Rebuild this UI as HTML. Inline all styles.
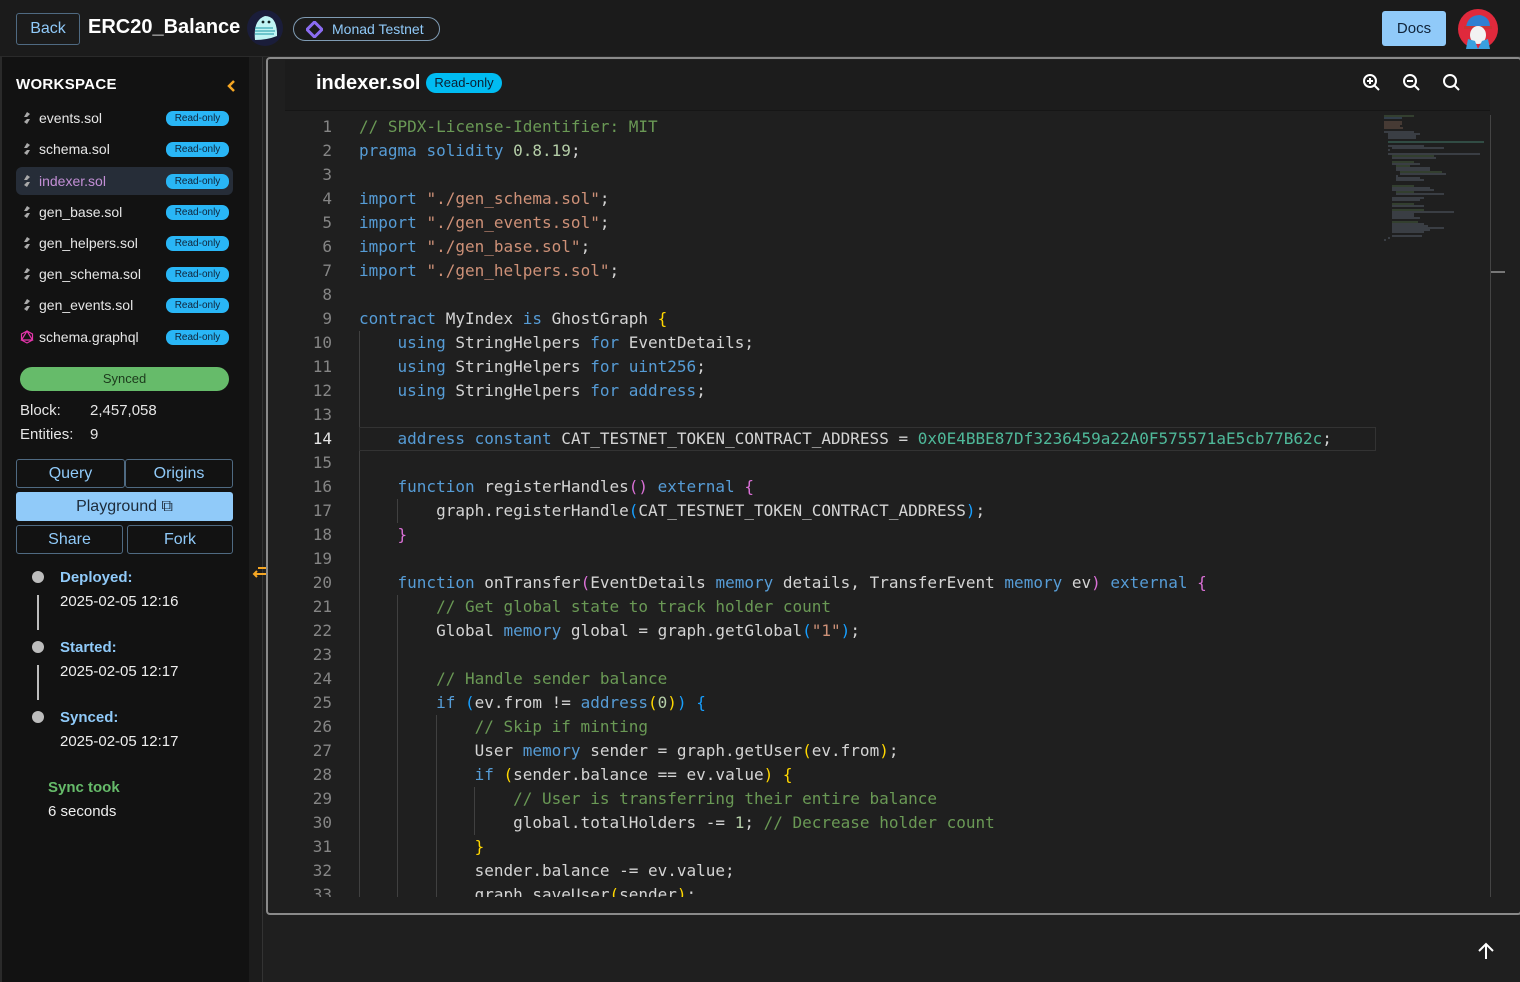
<!DOCTYPE html>
<html><head><meta charset="utf-8">
<style>
*{margin:0;padding:0;box-sizing:border-box}
body{width:1520px;height:982px;background:#1f1f1f;font-family:"Liberation Sans",sans-serif;color:#e0e0e0;position:relative;overflow:hidden}
.abs{position:absolute}
.top{left:0;top:0;width:1520px;height:57px;background:#1b1b1b;border-bottom:1px solid #2a2a2a}
.side{left:0;top:57px;width:249px;height:925px;background:#121212;border-left:2px solid #2a2a2a}
.strip{left:249px;top:57px;width:14px;height:925px;background:#1c1c1c;border-right:1px solid #333}
.btn{position:absolute;border:1px solid #4f6a82;border-radius:3px;color:#90caf9;font-size:16px;text-align:center}
.file{position:absolute;left:16px;width:217px;height:28px;font-size:14px;color:#e6e6e6;line-height:28px;padding-left:23px;border-radius:6px}
.file .ic{position:absolute;left:6px;top:7px;width:10px;height:14px}
.badge{position:absolute;right:4px;top:7px;width:63px;height:15px;border-radius:7px;background:#29b6f6;color:#10243a;font-size:10px;line-height:15px;text-align:center}
.code{position:absolute;left:285px;top:115px;width:1100px;height:782px;overflow:hidden;font-family:"DejaVu Sans Mono",monospace;font-size:16px;color:#d4d4d4}
.ln{position:absolute;left:0;width:47px;text-align:right;color:#858585}
.cl{position:absolute;left:74px;white-space:pre;height:24px;line-height:24px}
.k{color:#569cd6}.c{color:#6a9955}.s{color:#ce9178}.n{color:#b5cea8}.h{color:#4fb99a}
.y{color:#ffd700}.p{color:#da70d6}.b{color:#179fff}
.g{position:absolute;width:1px;background:#404040}
</style></head><body>
<div class="abs top"></div>
<div class="btn" style="left:16px;top:13px;width:64px;height:32px;line-height:30px;border-color:#4f6a82">Back</div>
<div class="abs" style="left:88px;top:16px;font-size:20px;font-weight:bold;color:#fff">ERC20_Balance</div>
<svg class="abs" style="left:247px;top:10px" width="36" height="36"><circle cx="18" cy="18" r="18" fill="#1a1d3a"/><path d="M8 30 Q6 10 18 6 Q29 6 30 22 L30 26 Q20 30 8 30Z" fill="#bff4f4"/><g stroke="#3aa9b5" stroke-width="1.2"><line x1="8" y1="18" x2="26" y2="18"/><line x1="8" y1="21" x2="28" y2="21"/><line x1="8" y1="24" x2="27" y2="24"/></g><circle cx="16" cy="12" r="1.4" fill="#122"/><circle cx="22" cy="12" r="1.4" fill="#122"/></svg>
<div class="abs" style="left:293px;top:17px;width:147px;height:24px;border:1px solid #7f9bb3;border-radius:12px;color:#90caf9;font-size:14px;line-height:22px;padding-left:38px">Monad Testnet</div>
<svg class="abs" style="left:306px;top:21px" width="17" height="17"><path d="M8.5 1 L16 8.5 L8.5 16 L1 8.5Z" fill="none" stroke="#8b6cf2" stroke-width="3" stroke-linejoin="round"/></svg>
<div class="abs" style="left:1382px;top:11px;width:64px;height:35px;background:#90caf9;border-radius:3px;color:#10243a;font-size:15px;text-align:center;line-height:35px">Docs</div>
<svg class="abs" style="left:1458px;top:9px" width="40" height="40"><circle cx="20" cy="20" r="20" fill="#e0293c"/><path d="M8 18 Q10 6 22 6 Q32 8 32 18Z" fill="#2f7fd1"/><rect x="6" y="17" width="28" height="3" fill="#c33"/><ellipse cx="20" cy="26" rx="8" ry="9" fill="#f2f2f2"/><path d="M8 40 L10 30 L17 32 L20 40Z M32 40 L30 30 L24 32 L20 40Z" fill="#3aa0e0"/></svg>

<div class="abs side"></div>
<div class="abs strip"></div>
<div class="abs" style="left:16px;top:76px;font-size:15px;font-weight:bold;color:#fff;letter-spacing:.3px">WORKSPACE</div>
<svg class="abs" style="left:226px;top:79px" width="10" height="14"><path d="M8 2 L3 7 L8 12" stroke="#f5a623" stroke-width="2.5" fill="none"/></svg>

<div class="file" style="top:104px">events.sol<svg class="ic" viewBox="0 0 10 14"><path d="M2 6 L5 1 L8 3 L5 6Z M8 8 L5 13 L2 11 L5 8Z" fill="#aaa"/></svg><div class="badge">Read-only</div></div>
<div class="file" style="top:135px">schema.sol<svg class="ic" viewBox="0 0 10 14"><path d="M2 6 L5 1 L8 3 L5 6Z M8 8 L5 13 L2 11 L5 8Z" fill="#aaa"/></svg><div class="badge">Read-only</div></div>
<div class="file" style="top:167px;background:#262d38;color:#c38fd6">indexer.sol<svg class="ic" viewBox="0 0 10 14"><path d="M2 6 L5 1 L8 3 L5 6Z M8 8 L5 13 L2 11 L5 8Z" fill="#aaa"/></svg><div class="badge">Read-only</div></div>
<div class="file" style="top:198px">gen_base.sol<svg class="ic" viewBox="0 0 10 14"><path d="M2 6 L5 1 L8 3 L5 6Z M8 8 L5 13 L2 11 L5 8Z" fill="#aaa"/></svg><div class="badge">Read-only</div></div>
<div class="file" style="top:229px">gen_helpers.sol<svg class="ic" viewBox="0 0 10 14"><path d="M2 6 L5 1 L8 3 L5 6Z M8 8 L5 13 L2 11 L5 8Z" fill="#aaa"/></svg><div class="badge">Read-only</div></div>
<div class="file" style="top:260px">gen_schema.sol<svg class="ic" viewBox="0 0 10 14"><path d="M2 6 L5 1 L8 3 L5 6Z M8 8 L5 13 L2 11 L5 8Z" fill="#aaa"/></svg><div class="badge">Read-only</div></div>
<div class="file" style="top:291px">gen_events.sol<svg class="ic" viewBox="0 0 10 14"><path d="M2 6 L5 1 L8 3 L5 6Z M8 8 L5 13 L2 11 L5 8Z" fill="#aaa"/></svg><div class="badge">Read-only</div></div>
<div class="file" style="top:323px">schema.graphql<svg class="ic" style="left:4px;width:14px" viewBox="0 0 14 14"><path d="M7 1 L12.5 4 L12.5 10 L7 13 L1.5 10 L1.5 4Z M7 1 L12.5 10 L1.5 10Z" fill="none" stroke="#e535ab" stroke-width="1.2"/></svg><div class="badge">Read-only</div></div>

<div class="abs" style="left:20px;top:367px;width:209px;height:24px;background:#66bb6a;border-radius:12px;color:#1c3a1c;font-size:13px;text-align:center;line-height:24px">Synced</div>
<div class="abs" style="left:20px;top:402px;font-size:15px;color:#e6e6e6">Block:</div>
<div class="abs" style="left:90px;top:402px;font-size:15px;color:#e6e6e6">2,457,058</div>
<div class="abs" style="left:20px;top:426px;font-size:15px;color:#e6e6e6">Entities:</div>
<div class="abs" style="left:90px;top:426px;font-size:15px;color:#e6e6e6">9</div>

<div class="btn" style="left:16px;top:459px;width:109px;height:29px;line-height:27px">Query</div>
<div class="btn" style="left:125px;top:459px;width:108px;height:29px;line-height:27px">Origins</div>
<div class="abs" style="left:16px;top:492px;width:217px;height:29px;background:#90caf9;border-radius:3px;color:#1d2b3a;font-size:16px;text-align:center;line-height:29px">Playground ⧉</div>
<div class="btn" style="left:16px;top:525px;width:107px;height:29px;line-height:27px">Share</div>
<div class="btn" style="left:127px;top:525px;width:106px;height:29px;line-height:27px">Fork</div>

<div class="abs" style="left:32px;top:571px;width:12px;height:12px;border-radius:6px;background:#bdbdbd"></div>
<div class="abs" style="left:37px;top:595px;width:2px;height:35px;background:#bdbdbd"></div>
<div class="abs" style="left:32px;top:641px;width:12px;height:12px;border-radius:6px;background:#bdbdbd"></div>
<div class="abs" style="left:37px;top:665px;width:2px;height:35px;background:#bdbdbd"></div>
<div class="abs" style="left:32px;top:711px;width:12px;height:12px;border-radius:6px;background:#bdbdbd"></div>
<div class="abs" style="left:60px;top:569px;font-size:15px;font-weight:bold;color:#90caf9">Deployed:</div>
<div class="abs" style="left:60px;top:593px;font-size:15px;color:#eee">2025-02-05 12:16</div>
<div class="abs" style="left:60px;top:639px;font-size:15px;font-weight:bold;color:#90caf9">Started:</div>
<div class="abs" style="left:60px;top:663px;font-size:15px;color:#eee">2025-02-05 12:17</div>
<div class="abs" style="left:60px;top:709px;font-size:15px;font-weight:bold;color:#90caf9">Synced:</div>
<div class="abs" style="left:60px;top:733px;font-size:15px;color:#eee">2025-02-05 12:17</div>
<div class="abs" style="left:48px;top:779px;font-size:15px;font-weight:bold;color:#66bb6a">Sync took</div>
<div class="abs" style="left:48px;top:803px;font-size:15px;color:#eee">6 seconds</div>

<svg class="abs" style="left:252px;top:563px" width="20" height="16"><path d="M6 5 H18 M15 2 L18 5 L15 8 M14 11 H2 M5 8 L2 11 L5 14" stroke="#f5a623" stroke-width="2" fill="none"/></svg>

<div class="abs" style="left:266px;top:57px;width:1256px;height:858px;border:2px solid #8a8a8a;border-radius:4px;background:#1f1f1f"></div>
<div class="abs" style="left:285px;top:60px;width:1205px;height:51px;background:#1c1c1c;border-bottom:1px solid #161616"></div>
<div class="abs" style="left:316px;top:72px;font-size:20px;font-weight:bold;color:#fff">indexer.sol</div>
<div class="abs" style="left:426px;top:73px;width:76px;height:20px;background:#00bcf2;border-radius:10px;color:#0a1f33;font-size:13px;text-align:center;line-height:20px">Read-only</div>
<svg class="abs" style="left:1361px;top:73px" width="100" height="22"><g stroke="#fff" stroke-width="2" fill="none"><circle cx="9" cy="8" r="6"/><line x1="13" y1="12" x2="18" y2="17"/><line x1="6" y1="8" x2="12" y2="8"/><line x1="9" y1="5" x2="9" y2="11"/><circle cx="49" cy="8" r="6"/><line x1="53" y1="12" x2="58" y2="17"/><line x1="46" y1="8" x2="52" y2="8"/><circle cx="89" cy="8" r="6"/><line x1="93" y1="12" x2="98" y2="17"/></g></svg>

<div class="abs" style="left:1490px;top:115px;width:1px;height:782px;background:#444"></div>
<div class="abs" style="left:1491px;top:271px;width:14px;height:2px;background:#777"></div>
<svg class="abs" style="left:1384px;top:115px" width="104" height="130"><g stroke-width="1" opacity=".85">
<line x1="0" y1="1" x2="30" y2="1" stroke="#4e6b45"/><line x1="0" y1="3" x2="18" y2="3" stroke="#4d6a85"/>
<line x1="0" y1="7" x2="18" y2="7" stroke="#7a5e50"/><line x1="0" y1="9" x2="18" y2="9" stroke="#7a5e50"/><line x1="0" y1="11" x2="16" y2="11" stroke="#7a5e50"/><line x1="0" y1="13" x2="19" y2="13" stroke="#7a5e50"/>
<line x1="0" y1="17" x2="30" y2="17" stroke="#5e6a77"/><line x1="4" y1="19" x2="36" y2="19" stroke="#5e6a77"/><line x1="4" y1="21" x2="32" y2="21" stroke="#5e6a77"/><line x1="4" y1="23" x2="32" y2="23" stroke="#5e6a77"/>
<line x1="4" y1="27" x2="100" y2="27" stroke="#4a8a78"/>
<line x1="4" y1="31" x2="40" y2="31" stroke="#5e6a77"/><line x1="8" y1="33" x2="60" y2="33" stroke="#5e6a77"/><line x1="4" y1="35" x2="6" y2="35" stroke="#5e6a77"/>
<line x1="4" y1="39" x2="96" y2="39" stroke="#5e6a77"/><line x1="8" y1="41" x2="50" y2="41" stroke="#4e6b45"/><line x1="8" y1="43" x2="52" y2="43" stroke="#5e6a77"/>
<line x1="8" y1="47" x2="30" y2="47" stroke="#4e6b45"/><line x1="8" y1="49" x2="36" y2="49" stroke="#5e6a77"/><line x1="12" y1="51" x2="26" y2="51" stroke="#4e6b45"/><line x1="12" y1="53" x2="46" y2="53" stroke="#5e6a77"/><line x1="12" y1="55" x2="46" y2="55" stroke="#5e6a77"/><line x1="16" y1="57" x2="58" y2="57" stroke="#4e6b45"/><line x1="16" y1="59" x2="62" y2="59" stroke="#5e6a77"/><line x1="12" y1="61" x2="14" y2="61" stroke="#5e6a77"/><line x1="12" y1="63" x2="36" y2="63" stroke="#5e6a77"/><line x1="12" y1="65" x2="40" y2="65" stroke="#5e6a77"/>
<line x1="8" y1="71" x2="30" y2="71" stroke="#4e6b45"/><line x1="8" y1="73" x2="46" y2="73" stroke="#5e6a77"/><line x1="8" y1="75" x2="50" y2="75" stroke="#5e6a77"/><line x1="12" y1="77" x2="30" y2="77" stroke="#4e6b45"/><line x1="12" y1="79" x2="60" y2="79" stroke="#5e6a77"/><line x1="8" y1="83" x2="40" y2="83" stroke="#5e6a77"/><line x1="8" y1="85" x2="36" y2="85" stroke="#5e6a77"/>
<line x1="8" y1="89" x2="30" y2="89" stroke="#4e6b45"/><line x1="8" y1="91" x2="40" y2="91" stroke="#5e6a77"/>
<line x1="8" y1="95" x2="40" y2="95" stroke="#4e6b45"/><line x1="8" y1="97" x2="70" y2="97" stroke="#5e6a77"/><line x1="8" y1="99" x2="30" y2="99" stroke="#5e6a77"/><line x1="8" y1="101" x2="30" y2="101" stroke="#5e6a77"/><line x1="8" y1="103" x2="36" y2="103" stroke="#5e6a77"/>
<line x1="8" y1="107" x2="34" y2="107" stroke="#4e6b45"/><line x1="8" y1="109" x2="40" y2="109" stroke="#5e6a77"/><line x1="8" y1="111" x2="44" y2="111" stroke="#5e6a77"/><line x1="8" y1="113" x2="60" y2="113" stroke="#5e6a77"/><line x1="8" y1="115" x2="46" y2="115" stroke="#5e6a77"/><line x1="8" y1="117" x2="40" y2="117" stroke="#5e6a77"/>
<line x1="8" y1="121" x2="38" y2="121" stroke="#5e6a77"/><line x1="4" y1="123" x2="6" y2="123" stroke="#5e6a77"/><line x1="0" y1="125" x2="2" y2="125" stroke="#5e6a77"/>
</g></svg>

<div class="code">
<div class="g" style="left:74px;top:216px;height:600px"></div>
<div class="g" style="left:112px;top:384px;height:24px"></div>
<div class="g" style="left:112px;top:480px;height:310px"></div>
<div class="g" style="left:151px;top:600px;height:190px"></div>
<div class="g" style="left:189px;top:672px;height:48px"></div>
<div class="abs" style="left:74px;top:312px;width:1017px;height:24px;border:1px solid #333"></div>
<div class="ln" style="top:0;line-height:24px">1<br>2<br>3<br>4<br>5<br>6<br>7<br>8<br>9<br>10<br>11<br>12<br>13<br><span style="color:#e6e6e6">14</span><br>15<br>16<br>17<br>18<br>19<br>20<br>21<br>22<br>23<br>24<br>25<br>26<br>27<br>28<br>29<br>30<br>31<br>32<br>33</div>
<div class="cl" style="top:0"><span class="c">// SPDX-License-Identifier: MIT</span></div>
<div class="cl" style="top:24px"><span class="k">pragma</span> <span class="k">solidity</span> <span class="n">0.8.19</span>;</div>
<div class="cl" style="top:72px"><span class="k">import</span> <span class="s">"./gen_schema.sol"</span>;</div>
<div class="cl" style="top:96px"><span class="k">import</span> <span class="s">"./gen_events.sol"</span>;</div>
<div class="cl" style="top:120px"><span class="k">import</span> <span class="s">"./gen_base.sol"</span>;</div>
<div class="cl" style="top:144px"><span class="k">import</span> <span class="s">"./gen_helpers.sol"</span>;</div>
<div class="cl" style="top:192px"><span class="k">contract</span> MyIndex <span class="k">is</span> GhostGraph <span class="y">{</span></div>
<div class="cl" style="top:216px">    <span class="k">using</span> StringHelpers <span class="k">for</span> EventDetails;</div>
<div class="cl" style="top:240px">    <span class="k">using</span> StringHelpers <span class="k">for</span> <span class="k">uint256</span>;</div>
<div class="cl" style="top:264px">    <span class="k">using</span> StringHelpers <span class="k">for</span> <span class="k">address</span>;</div>
<div class="cl" style="top:312px">    <span class="k">address</span> <span class="k">constant</span> CAT_TESTNET_TOKEN_CONTRACT_ADDRESS = <span class="h">0x0E4BBE87Df3236459a22A0F575571aE5cb77B62c</span>;</div>
<div class="cl" style="top:360px">    <span class="k">function</span> registerHandles<span class="p">()</span> <span class="k">external</span> <span class="p">{</span></div>
<div class="cl" style="top:384px">        graph.registerHandle<span class="b">(</span>CAT_TESTNET_TOKEN_CONTRACT_ADDRESS<span class="b">)</span>;</div>
<div class="cl" style="top:408px">    <span class="p">}</span></div>
<div class="cl" style="top:456px">    <span class="k">function</span> onTransfer<span class="p">(</span>EventDetails <span class="k">memory</span> details, TransferEvent <span class="k">memory</span> ev<span class="p">)</span> <span class="k">external</span> <span class="p">{</span></div>
<div class="cl" style="top:480px">        <span class="c">// Get global state to track holder count</span></div>
<div class="cl" style="top:504px">        Global <span class="k">memory</span> global = graph.getGlobal<span class="b">(</span><span class="s">"1"</span><span class="b">)</span>;</div>
<div class="cl" style="top:552px">        <span class="c">// Handle sender balance</span></div>
<div class="cl" style="top:576px">        <span class="k">if</span> <span class="b">(</span>ev.from != <span class="k">address</span><span class="y">(</span><span class="n">0</span><span class="y">)</span><span class="b">)</span> <span class="b">{</span></div>
<div class="cl" style="top:600px">            <span class="c">// Skip if minting</span></div>
<div class="cl" style="top:624px">            User <span class="k">memory</span> sender = graph.getUser<span class="y">(</span>ev.from<span class="y">)</span>;</div>
<div class="cl" style="top:648px">            <span class="k">if</span> <span class="y">(</span>sender.balance == ev.value<span class="y">)</span> <span class="y">{</span></div>
<div class="cl" style="top:672px">                <span class="c">// User is transferring their entire balance</span></div>
<div class="cl" style="top:696px">                global.totalHolders -= <span class="n">1</span>; <span class="c">// Decrease holder count</span></div>
<div class="cl" style="top:720px">            <span class="y">}</span></div>
<div class="cl" style="top:744px">            sender.balance -= ev.value;</div>
<div class="cl" style="top:768px">            graph.saveUser<span class="y">(</span>sender<span class="y">)</span>;</div>
</div>

<svg class="abs" style="left:1477px;top:942px" width="18" height="18"><path d="M9 17 V2 M2 9 L9 2 L16 9" stroke="#fff" stroke-width="2" fill="none"/></svg>
</body></html>
